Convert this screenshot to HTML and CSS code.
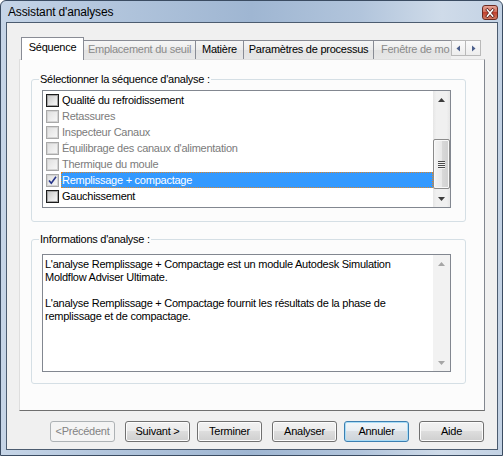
FILE: index.html
```html
<!DOCTYPE html>
<html lang="fr">
<head>
<meta charset="utf-8">
<title>Assistant d'analyses</title>
<link rel="stylesheet" href="styles.css">
</head>
<body>
<div class="window">
  <div class="titlebar">
    <span class="title">Assistant d'analyses</span>
    <span class="close">
      <svg width="16" height="14" viewBox="0 0 16 14">
        <path d="M5 3.5 L11 10.5 M11 3.5 L5 10.5" stroke="#5a1e18" stroke-width="3.4" stroke-linecap="square"/>
        <path d="M5 3.5 L11 10.5 M11 3.5 L5 10.5" stroke="#ffffff" stroke-width="1.8" stroke-linecap="square"/>
      </svg>
    </span>
  </div>
  <div class="client">
    <div class="tabstrip">
      <div class="tab sel">Séquence</div>
      <div class="tab dis w-empl">Emplacement du seuil</div>
      <div class="tab w-mat">Matière</div>
      <div class="tab w-par">Paramètres de processus</div>
      <div class="tab dis w-fen">Fenêtre de mo</div>
      <div class="tabscroll">
        <span class="tsbtn"><svg width="5" height="7" viewBox="0 0 5 7"><path d="M4 0.5 L0.5 3.5 L4 6.5 Z" fill="#4b5f8c"/></svg></span>
        <span class="tsbtn"><svg width="5" height="7" viewBox="0 0 5 7"><path d="M1 0.5 L4.5 3.5 L1 6.5 Z" fill="#4b5f8c"/></svg></span>
      </div>
    </div>
    <div class="panel">
      <fieldset class="group g1">
        <legend>Sélectionner la séquence d'analyse :</legend>
        <div class="listbox">
          <div class="rows">
            <div class="row"><span class="cb"></span><span class="label">Qualité du refroidissement</span></div>
            <div class="row dis"><span class="cb"></span><span class="label">Retassures</span></div>
            <div class="row dis"><span class="cb"></span><span class="label">Inspecteur Canaux</span></div>
            <div class="row dis"><span class="cb"></span><span class="label">Équilibrage des canaux d'alimentation</span></div>
            <div class="row dis"><span class="cb"></span><span class="label">Thermique du moule</span></div>
            <div class="row dis selected"><span class="cb"><svg width="11" height="11" viewBox="0 0 11 11"><path d="M2 5.5 L4.3 8.3 L9 1.8" fill="none" stroke="#27358a" stroke-width="1.6"/></svg></span><span class="label">Remplissage + compactage</span></div>
            <div class="row"><span class="cb"></span><span class="label">Gauchissement</span></div>
          </div>
          <div class="vscroll">
            <div class="sbbtn"><svg width="7" height="4" viewBox="0 0 7 4"><path d="M0 4 L3.5 0 L7 4 Z" fill="#3c3c3c"/></svg></div>
            <div class="track"><div class="thumb"><span class="grip"></span><span class="grip"></span><span class="grip"></span><span class="grip"></span></div></div>
            <div class="sbbtn"><svg width="7" height="4" viewBox="0 0 7 4"><path d="M0 0 L7 0 L3.5 4 Z" fill="#3c3c3c"/></svg></div>
          </div>
        </div>
      </fieldset>
      <fieldset class="group g2">
        <legend>Informations d'analyse :</legend>
        <div class="textbox">
          <div class="text">
            <p>L'analyse Remplissage + Compactage est un module Autodesk Simulation<br>Moldflow Adviser Ultimate.</p>
            <p>L'analyse Remplissage + Compactage fournit les résultats de la phase de<br>remplissage et de compactage.</p>
          </div>
          <div class="vscroll off">
            <div class="sbbtn"><svg width="7" height="4" viewBox="0 0 7 4"><path d="M0 4 L3.5 0 L7 4 Z" fill="#a6a6a6"/></svg></div>
            <div class="track"></div>
            <div class="sbbtn"><svg width="7" height="4" viewBox="0 0 7 4"><path d="M0 0 L7 0 L3.5 4 Z" fill="#a6a6a6"/></svg></div>
          </div>
        </div>
      </fieldset>
    </div>
    <div class="buttons">
      <button class="btn dis">&lt;Précédent</button>
      <button class="btn ml10">Suivant &gt;</button>
      <button class="btn ml7">Terminer</button>
      <button class="btn ml10">Analyser</button>
      <button class="btn ml7 def">Annuler</button>
      <button class="btn ml10">Aide</button>
    </div>
  </div>
</div>
</body>
</html>
```

FILE: styles.css
```css
body {
  margin: 0;
  background: #ffffff;
  font-family: "Liberation Sans", Arial, sans-serif;
  font-size: 11px;
  letter-spacing: -0.25px;
  color: #000;
}

.window {
  width: 503px;
  height: 456px;
  box-sizing: border-box;
  border: 1px solid #3b4c62;
  border-radius: 6px 6px 0 0;
  padding: 0 4px 5px 5px;
  background: linear-gradient(90deg, #c6d5e7 0%, #b3c6dd 20%, #9fb6d2 50%, #b2c5dc 72%, #cfdbe9 88%, #c3d2e4 100%);
  display: flex;
  flex-direction: column;
}

.titlebar {
  height: 21px;
  display: flex;
  justify-content: space-between;
  align-items: flex-start;
}

.title {
  margin: 4px 0 0 2px;
  font-size: 12px;
  letter-spacing: -0.15px;
  line-height: 15px;
  color: #000;
}

.close {
  margin: 4px 0 0 0;
  width: 16px;
  height: 15px;
  box-sizing: border-box;
  border: 1px solid #6b2a22;
  border-radius: 3px;
  background: linear-gradient(#e6a597, #cf6a57 50%, #c0412e 50%, #d27b62);
  display: flex;
  align-items: center;
  justify-content: center;
}

.close svg { display: block; }

.client {
  flex: 1;
  border: 1px solid #4c5c70;
  background: #f0f0f0;
  display: flex;
  flex-direction: column;
}

.tabstrip {
  display: flex;
  align-items: flex-end;
  height: 22px;
  margin: 14px 0 0 14px;
}

.tab {
  box-sizing: border-box;
  height: 19px;
  border-top: 1px solid #898c95;
  border-right: 1px solid #898c95;
  background: linear-gradient(#f6f6f6, #ececec 50%, #e2e2e2 51%, #e7e7e7);
  text-align: center;
  line-height: 16px;
  white-space: nowrap;
  overflow: hidden;
}

.tab.sel {
  width: 63px;
  height: 23px;
  border-left: 1px solid #898c95;
  margin-bottom: -1px;
  background: #ffffff;
  line-height: 19px;
  position: relative;
  z-index: 1;
}

.tab.dis { color: #8a8a8a; }

.w-empl { width: 112px; }
.w-mat { width: 48px; }
.w-par { width: 130px; }
.w-fen {
  width: 77px;
  border-right: none;
  text-align: left;
  padding-left: 7px;
}

.tabscroll {
  align-self: flex-start;
  margin-top: 3px;
  display: flex;
}

.tsbtn {
  width: 15px;
  height: 16px;
  box-sizing: border-box;
  border: 1px solid #b9b9b9;
  background: linear-gradient(#fbfbfb, #ededed);
  display: flex;
  align-items: center;
  justify-content: center;
}

.tsbtn + .tsbtn { border-left: none; }

.panel {
  margin-left: 12px;
  width: 466px;
  height: 352px;
  box-sizing: border-box;
  border: 1px solid;
  border-color: #dedede #828790 #6f6f6f #dedede;
  background: #fcfcfc;
  padding: 12px 0 0 11px;
}

.group {
  margin: 0;
  width: 435px;
  box-sizing: border-box;
  border: 1px solid #d5dfe5;
  border-radius: 3px;
  padding: 4px 10px 13px 10px;
}

.group legend {
  padding: 0 1px;
  margin-left: -3px;
  line-height: 14px;
}

.g2 {
  margin-top: 10px;
  padding-top: 8px;
  padding-bottom: 11px;
}

.listbox,
.textbox {
  width: 409px;
  height: 118px;
  box-sizing: border-box;
  border: 1px solid #828790;
  background: #ffffff;
  display: flex;
}

.rows {
  flex: 1;
  padding-top: 1px;
}

.row {
  height: 16px;
  display: flex;
  align-items: center;
  padding-left: 3px;
}

.cb {
  width: 13px;
  height: 13px;
  box-sizing: border-box;
  border: 1px solid #1c1c1c;
  box-shadow: inset 0 0 0 1px #a4a4a4;
  background: linear-gradient(135deg, #c4c4c4, #eeeeee 70%, #f8f8f8);
  margin-right: 2px;
  display: flex;
  align-items: center;
  justify-content: center;
}

.cb svg { display: block; }

.row.dis .cb {
  border-color: #a9a9a9;
  box-shadow: inset 0 0 0 1px #d4d4d4;
  background: linear-gradient(135deg, #dedede, #f1f1f1 70%, #f7f7f7);
}

.label {
  flex: 1;
  height: 16px;
  line-height: 16px;
  padding-left: 1px;
  white-space: nowrap;
}

.row.dis .label { color: #7b7b7b; }

.row.selected .label {
  background: #3399ff;
  color: #ffffff;
  outline: 1px dotted #d9852b;
  outline-offset: -1px;
}

.vscroll {
  width: 17px;
  display: flex;
  flex-direction: column;
  background: linear-gradient(90deg, #e6e6e6, #f0f0f0 20%, #f0f0f0 80%, #e6e6e6);
}

.vscroll.off { background: #f2f2f2; }

.sbbtn {
  height: 17px;
  display: flex;
  align-items: center;
  justify-content: center;
}

.sbbtn svg { display: block; }

.track {
  flex: 1;
}

.thumb {
  margin-top: 31px;
  height: 50px;
  box-sizing: border-box;
  border: 1px solid #8b8b8b;
  border-radius: 2px;
  background: linear-gradient(90deg, #f4f4f4, #e9e9e9 50%, #d9d9d9 51%, #d0d0d0);
  box-shadow: inset 0 0 0 1px #f8f8f8;
  display: flex;
  flex-direction: column;
  align-items: center;
  justify-content: center;
  gap: 1px;
}

.grip {
  width: 7px;
  height: 1px;
  background: #4a4a4a;
  box-shadow: 0 1px 0 #f4f4f4;
}

.text {
  flex: 1;
  padding: 3px 0 0 2px;
  line-height: 13px;
}

.text p { margin: 0 0 13px 0; }

.buttons {
  display: flex;
  margin: 10px 0 0 43px;
}

.btn {
  width: 65px;
  height: 21px;
  box-sizing: border-box;
  padding: 0;
  margin: 0;
  border: 1px solid #707070;
  border-radius: 3px;
  background: linear-gradient(#f2f2f2, #ebebeb 45%, #dddddd 50%, #cfcfcf);
  box-shadow: inset 0 0 0 1px #fcfcfc;
  font: inherit;
  letter-spacing: inherit;
  color: #000;
  text-align: center;
  line-height: 19px;
}

.btn.dis {
  border-color: #adb2b5;
  background: #f4f4f4;
  box-shadow: none;
  color: #838383;
}

.btn.def {
  border-color: #3c7fb1;
  box-shadow: inset 0 0 0 1px #a9dcf6;
  background: linear-gradient(#f2f6f9, #e8eef3 45%, #dadfe4 50%, #cdd4da);
}

.ml10 { margin-left: 10px; }
.ml7 { margin-left: 7px; }
```
